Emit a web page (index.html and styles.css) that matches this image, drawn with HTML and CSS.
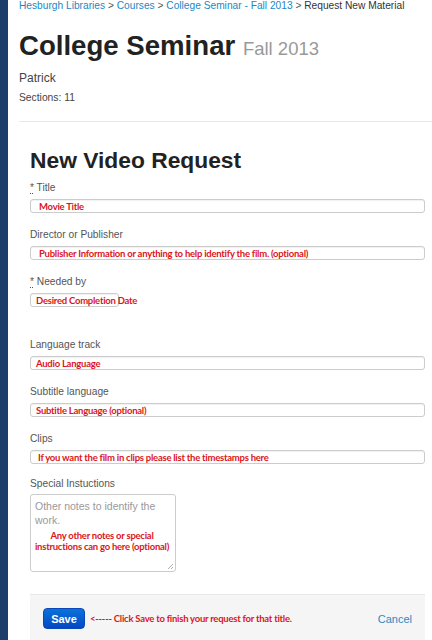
FILE: index.html
```html
<!DOCTYPE html>
<html lang="en">
<head>
<meta charset="utf-8">
<title>Request New Material</title>
<link rel="stylesheet" href="styles.css">
</head>
<body>
<div class="page">
  <aside class="rail"></aside>
  <main class="content">
    <nav class="crumbs">
      <a href="#">Hesburgh Libraries</a> <span class="sep">&gt;</span>
      <a href="#">Courses</a> <span class="sep">&gt;</span>
      <a href="#">College Seminar - Fall 2013</a> <span class="sep">&gt;</span>
      <span class="current">Request New Material</span>
    </nav>
    <header class="course">
      <h1 class="course-title">College Seminar <small class="term">Fall 2013</small></h1>
      <p class="instructor">Patrick</p>
      <p class="sections">Sections: 11</p>
    </header>
    <section class="request">
      <h2 class="request-title">New Video Request</h2>
      <form class="form">
        <div class="field">
          <label class="label"><abbr class="req">*</abbr> Title</label>
          <div class="input"><span class="note pad-l">Movie Title</span></div>
        </div>
        <div class="field">
          <label class="label">Director or Publisher</label>
          <div class="input"><span class="note pad-l">Publisher Information or anything to help identify the film. (optional)</span></div>
        </div>
        <div class="field field-date">
          <label class="label"><abbr class="req">*</abbr> Needed by</label>
          <div class="input input-date"><span class="note pad-s">Desired Completion Date</span></div>
        </div>
        <div class="field">
          <label class="label">Language track</label>
          <div class="input"><span class="note pad-s">Audio Language</span></div>
        </div>
        <div class="field">
          <label class="label">Subtitle language</label>
          <div class="input"><span class="note pad-s">Subtitle Language (optional)</span></div>
        </div>
        <div class="field field-clips">
          <label class="label">Clips</label>
          <div class="input"><span class="note pad-m">If you want the film in clips please list the timestamps here</span></div>
        </div>
        <div class="field field-area">
          <label class="label">Special Instuctions</label>
          <div class="textarea">
            <div class="placeholder">Other notes to identify the work.</div>
            <div class="note note-block">Any other notes or special<br>instructions can go here (optional)</div>
            <svg class="grip" width="7" height="7" viewBox="0 0 7 7"><path d="M6 1L1 6M6 4L4 6" stroke="#999" stroke-width="0.8" fill="none"/></svg>
          </div>
        </div>
        <div class="actions">
          <div class="actions-left">
            <button type="button" class="btn-save">Save</button>
            <span class="note note-save">&lt;----- Click Save to finish your request for that title.</span>
          </div>
          <a href="#" class="cancel">Cancel</a>
        </div>
      </form>
    </section>
  </main>
</div>
</body>
</html>
```
FILE: styles.css
```css
html, body {
  margin: 0;
  padding: 0;
  background: #fff;
}
body {
  font-family: "Liberation Sans", Arial, sans-serif;
  color: #333;
  overflow: hidden;
}
.page {
  display: flex;
  min-height: 640px;
}
.rail {
  width: 8px;
  flex: none;
  background: #1d3d6a;
}
.content {
  flex: 1;
  padding-left: 11px;
}
.crumbs {
  font-size: 10.2px;
  line-height: 11px;
  color: #444;
  white-space: nowrap;
}
.crumbs a {
  color: #1b87c4;
  text-decoration: none;
}
.crumbs .sep { color: #555; }
.crumbs .current { color: #333; }

.course-title {
  margin: 19px 0 0;
  font-size: 27.6px;
  line-height: 32px;
  font-weight: bold;
  color: #222;
}
.term {
  font-size: 18.5px;
  font-weight: normal;
  color: #999;
}
.instructor {
  margin: 5px 0 0;
  font-size: 12px;
  line-height: 16px;
  color: #444;
}
.sections {
  margin: 5px 0 0;
  font-size: 10.3px;
  line-height: 14px;
  color: #444;
}
.request {
  margin-top: 16px;
  border-top: 1px solid #e8e8e8;
  padding: 0 7px 0 11px;
}
.request-title {
  margin: 25px 0 0;
  font-size: 22.8px;
  line-height: 26px;
  font-weight: bold;
  color: #222;
}
.form {
  margin-top: 8px;
  display: flex;
  flex-direction: column;
}
.field {
  display: flex;
  flex-direction: column;
  gap: 4px;
  margin-bottom: 15px;
}
.field-date { margin-bottom: 31px; }
.field-clips { margin-bottom: 13px; }
.field-area { gap: 3px; margin-bottom: 22px; }
.label {
  font-size: 10.2px;
  line-height: 14px;
  color: #555;
}
.req {
  text-decoration: underline dotted;
  text-underline-offset: 2px;
}
.input {
  box-sizing: border-box;
  height: 14px;
  border: 1px solid #ccc;
  border-radius: 3px;
  box-shadow: inset 0 1px 1px rgba(0,0,0,0.06);
  display: flex;
  align-items: center;
  white-space: nowrap;
  overflow: visible;
  background: #fff;
}
.input-date { width: 89px; }
.note {
  font-family: Lato, "Open Sans", sans-serif;
  font-weight: bold;
  font-size: 9.5px;
  line-height: 11px;
  color: #dc1520;
  letter-spacing: -0.25px;
}
.pad-l { padding-left: 8px; }
.pad-s { padding-left: 5px; }
.pad-m { padding-left: 7px; }
.textarea {
  position: relative;
  box-sizing: border-box;
  width: 146px;
  height: 78px;
  border: 1px solid #ccc;
  border-radius: 3px;
  padding: 4px 4px;
  background: #fff;
}
.placeholder {
  font-size: 10.5px;
  line-height: 14px;
  color: #999;
}
.note-block {
  margin-top: 3px;
  margin-left: -2px;
  text-align: center;
  white-space: nowrap;
}
.grip {
  position: absolute;
  right: 1px;
  bottom: 1px;
}
.actions {
  display: flex;
  align-items: center;
  justify-content: space-between;
  background: #f5f5f5;
  border-top: 1px solid #e8e8e8;
  padding: 13px 13px 30px 13px;
}
.actions-left {
  display: flex;
  align-items: center;
  gap: 5px;
}
.btn-save {
  width: 42px;
  height: 21px;
  border: 1px solid #0a47b8;
  border-radius: 4px;
  background: linear-gradient(#0a73d8, #0547c4);
  color: #fff;
  font-family: "Liberation Sans", Arial, sans-serif;
  font-weight: bold;
  font-size: 11px;
  padding: 0;
}
.cancel {
  color: #2a8ac6;
  text-decoration: none;
  font-size: 11px;
}
```
